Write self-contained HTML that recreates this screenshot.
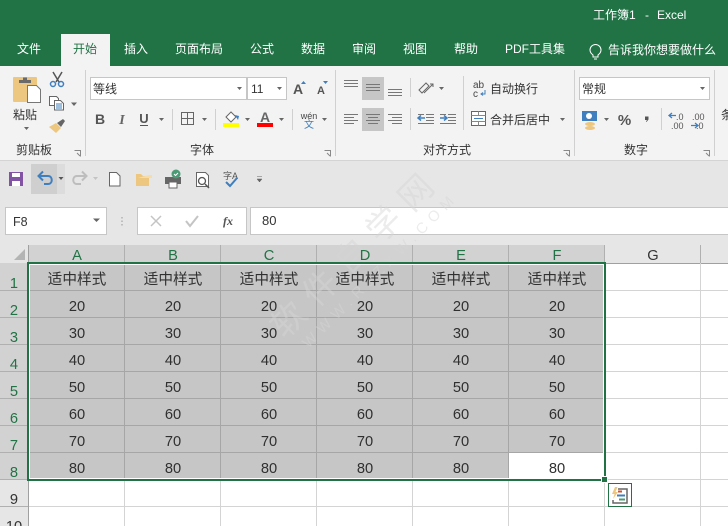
<!DOCTYPE html>
<html lang="zh"><head><meta charset="utf-8"><title>工作簿1 - Excel</title>
<style>
html,body{margin:0;padding:0;width:728px;height:526px;overflow:hidden;background:#fff}
svg{display:block}
text{font-family:"Liberation Sans","Noto Sans CJK SC",sans-serif;font-size:12px;fill:#333}
.t text{fill:#fff}
.g{text-anchor:middle;font-size:14.67px;fill:#303030}
.h{text-anchor:middle;font-size:14.67px;fill:#217346}
.r{text-anchor:middle;font-size:14.67px;fill:#217346}
</style></head><body>
<svg width="728" height="526" viewBox="0 0 728 526" xmlns="http://www.w3.org/2000/svg">
<!-- title + tabs -->
<rect width="728" height="66" fill="#217346"/>
<rect x="61" y="34" width="49" height="32" fill="#f3f3f3"/>
<g class="t">
<text x="593" y="19">工作簿1</text><text x="645" y="19">-</text><text x="657" y="19">Excel</text>
<text x="17" y="53">文件</text>
<text x="73" y="53" style="fill:#217346">开始</text>
<text x="124" y="53">插入</text>
<text x="175" y="53">页面布局</text>
<text x="250" y="53">公式</text>
<text x="301" y="53">数据</text>
<text x="352" y="53">审阅</text>
<text x="403" y="53">视图</text>
<text x="454" y="53">帮助</text>
<text x="505" y="53">PDF工具集</text>
<text x="608" y="54">告诉我你想要做什么</text>
</g>
<path d="M593 55c-2-1.500-3-3-3-5a5.500 5.500 0 0 1 11 0c0 2-1 3.500-3 5v2h-5zM594 59h3" fill="none" stroke="#fff"/>
<!-- ribbon -->
<rect y="66" width="728" height="94" fill="#f3f3f3"/>
<rect y="160" width="728" height="1" fill="#d4d4d4"/>
<rect y="161" width="728" height="84" fill="#e6e6e6"/>
<path d="M85.500 70v86M335.500 70v86M574.500 70v86M714.500 70v86" stroke="#d0d0d0"/>
<!-- clipboard -->
<rect x="13" y="77" width="24" height="25" rx="1" fill="#edc77f"/>
<path d="M19 80h4v-2.500h4V80h4v3H19z" fill="#6a6a6a"/>
<path d="M27.500 85.500h9l4 4v13h-13z" fill="#fff" stroke="#777"/>
<text x="13" y="119">粘贴</text>
<path d="M24 127h5l-2.500 3zM71 102.500h6l-3 3.500z" fill="#666"/>
<path d="M53 72l6 10M62 72l-6 10" stroke="#555" stroke-width="1.500" fill="none"/>
<circle cx="53" cy="84" r="2.500" fill="none" stroke="#3f7fbf" stroke-width="1.500"/><circle cx="61" cy="84" r="2.500" fill="none" stroke="#3f7fbf" stroke-width="1.500"/>
<path d="M49.500 96.500h7l2 2v7h-9z" fill="#fff" stroke="#666"/>
<path d="M54.500 100.500h6l3 3v6.500h-9z" fill="#fff" stroke="#666"/>
<path d="M56 104h6M56 106h6M56 108h6" stroke="#3f7fbf"/>
<path d="M49 127l7-4 5 5-5 5z" fill="#edc77f"/><path d="M57 123l6-4 2 2-4 6z" fill="#666"/>
<text x="16" y="154">剪贴板</text>
<path d="M74.500 150.500h6v6M77 153l3 3" fill="none" stroke="#888"/>
<!-- font group -->
<rect x="90.500" y="77.500" width="156" height="22" fill="#fff" stroke="#c6c6c6"/>
<rect x="247.500" y="77.500" width="39" height="22" fill="#fff" stroke="#c6c6c6"/>
<text x="93" y="93">等线</text><text x="251" y="93">11</text>
<path d="M237 87h5l-2.500 3zM277 87h5l-2.500 3z" fill="#666"/>
<text x="293" y="94" style="font-size:14px;fill:#555;font-weight:bold">A</text>
<text x="317" y="94" style="font-size:11px;fill:#555;font-weight:bold">A</text>
<path d="M301 84h5l-2.500-3zM323 81h5l-2.500 3z" fill="#3f7fbf"/>
<text x="100" y="124" text-anchor="middle" style="font-size:14px;font-weight:bold;fill:#555">B</text>
<text x="122" y="124" text-anchor="middle" style="font-size:14px;font-style:italic;font-weight:bold;fill:#666;font-family:'Liberation Serif',serif">I</text>
<text x="144" y="123" text-anchor="middle" style="font-size:13px;font-weight:bold;fill:#555">U</text>
<path d="M140 125.500h8" stroke="#555"/>
<path d="M159 118h5l-2.500 3zM202 118h5l-2.500 3zM245 118h5l-2.500 3zM279 118h5l-2.500 3zM322 118h5l-2.500 3z" fill="#666"/>
<path d="M172.500 109v21M215.500 109v21M292.500 109v21" stroke="#d0d0d0"/>
<path d="M181.500 112.500h12v12h-12zM187.500 112.500v12M181.500 118.500h12" fill="none" stroke="#666"/>
<path d="M226 117l5-5 5 5-5 5z" fill="#fff" stroke="#666"/><path d="M235 115l4 1-1 4z" fill="#3f7fbf"/>
<rect x="223" y="123" width="16" height="4" fill="#ff0"/>
<text x="265" y="122" text-anchor="middle" style="font-size:14px;font-weight:bold;fill:#666">A</text>
<rect x="257" y="123" width="16" height="4" fill="#f00"/>
<text x="309" y="119" text-anchor="middle" style="font-size:9px;fill:#444">wén</text>
<text x="309" y="128" text-anchor="middle" style="font-size:10px;fill:#3f7fbf">文</text>
<text x="190" y="154">字体</text>
<path d="M324.500 150.500h6v6M327 153l3 3" fill="none" stroke="#888"/>
<!-- alignment -->
<rect x="362" y="77" width="22" height="23" fill="#c6c6c6"/>
<rect x="362" y="108" width="22" height="23" fill="#c6c6c6"/>
<path d="M344 80.500h14M344 83.500h14M344 86.500h14M366 84.500h14M366 87.500h14M366 90.500h14M388 89.500h14M388 92.500h14M388 95.500h14" stroke="#777"/>
<path d="M344 114.500h14M344 117.500h10M344 120.500h14M344 123.500h10M366 114.500h14M368 117.500h10M366 120.500h14M368 123.500h10M388 114.500h14M392 117.500h10M388 120.500h14M392 123.500h10" stroke="#777"/>
<path d="M410.500 78v19M410.500 108v22M463.500 76v54" stroke="#d0d0d0"/>
<path d="M419 90l7-7 3 3-7 7zM424 93l9-9M430 84h3v3" fill="none" stroke="#666"/>
<path d="M439 87h5l-2.500 3zM560 118h5l-2.500 3z" fill="#666"/>
<path d="M426 114.500h8M426 117.500h8M426 120.500h8M418 123.500h16M418 114.500h6M448 114.500h8M448 117.500h8M448 120.500h8M440 123.500h16M440 114.500h6" stroke="#777"/>
<path d="M418 118h7M421 115.500l-3 2.500 3 2.500" fill="none" stroke="#3f7fbf" stroke-width="1.500"/>
<path d="M440 118h7M444 115.500l3 2.500-3 2.500" fill="none" stroke="#3f7fbf" stroke-width="1.500"/>
<text x="473" y="88" style="font-size:10px;fill:#444">ab</text>
<text x="473" y="97" style="font-size:10px;fill:#444">c</text>
<path d="M485 90v4h-4M483 92.500l-2 1.500 2 1.500" fill="none" stroke="#3f7fbf"/>
<text x="490" y="93">自动换行</text>
<rect x="471.500" y="111.500" width="14" height="14" fill="#fff" stroke="#666"/>
<path d="M471.500 115.500h14M471.500 121.500h14M478.500 111.500v4M478.500 121.500v4" stroke="#888" fill="none"/>
<path d="M474 118.500h9" stroke="#3f7fbf"/>
<text x="490" y="124">合并后居中</text>
<text x="423" y="154">对齐方式</text>
<path d="M563.500 150.500h6v6M566 153l3 3" fill="none" stroke="#888"/>
<!-- number -->
<rect x="579.500" y="77.500" width="130" height="22" fill="#fff" stroke="#c6c6c6"/>
<text x="582" y="93">常规</text>
<path d="M700 87h5l-2.500 3z" fill="#666"/>
<rect x="582" y="111" width="15" height="10" fill="#3f7fbf"/><circle cx="589" cy="116" r="3" fill="#fff"/>
<ellipse cx="590" cy="124" rx="5" ry="2" fill="#edc77f"/><ellipse cx="590" cy="128" rx="5" ry="2" fill="#edc77f"/>
<path d="M604 118h5l-2.500 3z" fill="#666"/>
<text x="624.500" y="125" text-anchor="middle" style="font-size:15px;fill:#555;font-weight:bold">%</text>
<path d="M645 116.500h3.500v3l-2 2.500-.5-.5 1-1.500h-2z" fill="#555"/>
<path d="M661.500 108v22" stroke="#d0d0d0"/>
<text x="676" y="120" style="font-size:9px;fill:#555">.0</text><text x="671" y="129" style="font-size:9px;fill:#555">.00</text>
<path d="M669 115.500h7M672 113l-3 2.500 3 2.500" fill="none" stroke="#3f7fbf" stroke-width="1.300"/>
<text x="692" y="120" style="font-size:9px;fill:#555">.00</text><text x="696" y="129" style="font-size:9px;fill:#555">.0</text>
<path d="M691 125.500h7M695 123l3 2.500-3 2.500" fill="none" stroke="#3f7fbf" stroke-width="1.300"/>
<text x="624" y="154">数字</text>
<path d="M703.500 150.500h6v6M706 153l3 3" fill="none" stroke="#888"/>
<text x="721" y="119">条</text>
<!-- QAT -->
<rect x="9" y="172" width="14" height="14" fill="#8253a5"/><rect x="12" y="173" width="8" height="4" fill="#fff"/><rect x="12" y="181" width="8" height="5" fill="#fff"/>
<rect x="31" y="164" width="26" height="30" fill="#cfcfcf"/><rect x="57" y="164" width="8" height="30" fill="#dcdcdc"/>
<path d="M39 176h9c5 0 5 8 0 8h-4M43 171.500l-4.500 4.500 4.500 4.500" fill="none" stroke="#3f7fbf" stroke-width="2"/>
<path d="M58.500 177h5l-2.500 3z" fill="#555"/>
<path d="M86 176h-9c-5 0-5 8 0 8h4M82 171.500l4.500 4.500-4.500 4.500" fill="none" stroke="#bdbdbd" stroke-width="2"/>
<path d="M93 177h5l-2.500 3z" fill="#c4c4c4"/>
<path d="M109.500 172.500h7l3.500 3.500v10h-10.500z" fill="#fff" stroke="#666"/>
<path d="M136 186v-12h5l2 2h6v10z" fill="#edc77f"/><path d="M138 178h14v-3l-3 0z" fill="#f5dca8"/>
<rect x="165" y="177" width="16" height="7" fill="#666"/><rect x="169" y="182" width="8" height="6" fill="#fff" stroke="#666"/>
<circle cx="176" cy="174" r="4.500" fill="#4d9a76"/><path d="M174 174l1.500 1.500 2.500-2.500" fill="none" stroke="#fff"/>
<path d="M196.500 172.500h9l3 3v11h-12z" fill="#fff" stroke="#666"/><circle cx="202" cy="181" r="3.500" fill="#fff" stroke="#555" stroke-width="1.300"/><path d="M205 184l4 4" stroke="#555" stroke-width="1.500"/>
<text x="223" y="179" style="font-size:9px;fill:#555">字A</text>
<path d="M226 182l4 4 7-8" fill="none" stroke="#3f7fbf" stroke-width="2"/>
<path d="M257 176.500h5M257 179h5l-2.500 3z" fill="#666" stroke="#666" stroke-width=".5"/>
<!-- formula bar -->
<rect x="5.500" y="207.500" width="101" height="27" fill="#fff" stroke="#c6c6c6"/>
<text x="13" y="226" style="font-size:12.500px">F8</text>
<path d="M93 218.500h7l-3.500 3.500z" fill="#666"/>
<path d="M122 217v1.500M122 220.500v1.500M122 224v1.500" stroke="#b0b0b0" stroke-width="1.500"/>
<rect x="137.500" y="207.500" width="109" height="27" fill="#fff" stroke="#c6c6c6"/>
<path d="M151 216l10 10M161 216l-10 10" stroke="#c4c4c4" stroke-width="1.500"/>
<path d="M186 221l4 5 8-10" fill="none" stroke="#c4c4c4" stroke-width="2"/>
<text x="228" y="225" text-anchor="middle" style="font-family:'Liberation Serif',serif;font-style:italic;font-weight:bold;font-size:12px;fill:#555">fx</text>
<rect x="250.500" y="207.500" width="478" height="27" fill="#fff" stroke="#c6c6c6"/>
<text x="262" y="225" style="font-size:13px">80</text>
<!-- grid white + lines -->
<rect x="0" y="245" width="28" height="281" fill="#e6e6e6"/>
<rect x="28" y="245" width="700" height="18" fill="#e6e6e6"/>
<rect x="29" y="245" width="576" height="18" fill="#d2d2d2"/>
<rect x="0" y="263" width="28" height="216" fill="#d2d2d2"/>
<path d="M25 249v11H14z" fill="#b4b4b4"/>
<path d="M28.500 245v18M124.500 245v18M220.500 245v18M316.500 245v18M412.500 245v18M508.500 245v18M604.500 245v18M700.500 245v18" stroke="#b0b0b0"/>
<path d="M0 290.500h28M0 317.500h28M0 344.500h28M0 371.500h28M0 398.500h28M0 425.500h28M0 452.500h28M0 479.500h28M0 506.500h28" stroke="#b0b0b0"/>
<path d="M28 263.500h700" stroke="#a0a0a0"/>
<path d="M28.500 245v281" stroke="#a0a0a0"/>
<path d="M29 290.500h699M29 317.500h699M29 344.500h699M29 371.500h699M29 398.500h699M29 425.500h699M29 452.500h699M29 479.500h699M29 506.500h699M124.500 263v263M220.500 263v263M316.500 263v263M412.500 263v263M508.500 263v263M604.500 263v263M700.500 263v263" stroke="#d4d4d4"/>
<!-- selected cells -->
<rect x="29" y="264" width="575" height="215" fill="#c6c6c6"/>
<rect x="509" y="453" width="95" height="26" fill="#fff"/>
<path d="M29 290.500h575M29 317.500h575M29 344.500h575M29 371.500h575M29 398.500h575M29 425.500h575M29 452.500h575M124.500 264v215M220.500 264v215M316.500 264v215M412.500 264v215M508.500 264v215" stroke="#a6a6a6"/>
<!-- watermark -->
<g transform="rotate(-45 352 256)" opacity=".45">
<text x="352" y="268" text-anchor="middle" textLength="214" style="font-size:34px;fill:#d6d6d6">软件自学网</text>
</g>
<g transform="rotate(-45 378 272)" opacity=".45">
<text x="378" y="277" text-anchor="middle" textLength="207" style="font-size:15px;fill:#d6d6d6">WWW.RJZXW.COM</text>
</g>
<rect x="29.500" y="264.500" width="574" height="214" fill="none" stroke="#fff"/>
<rect x="28" y="263" width="577" height="217" fill="none" stroke="#217346" stroke-width="2"/>
<rect x="601" y="476" width="7" height="7" fill="#fff"/><rect x="602" y="477" width="5" height="5" fill="#217346"/>
<!-- headers -->
<text class="h" y="260"><tspan x="77">A</tspan><tspan x="173">B</tspan><tspan x="269">C</tspan><tspan x="365">D</tspan><tspan x="461">E</tspan><tspan x="557">F</tspan></text>
<text class="h" y="260" x="653" style="fill:#333">G</text>
<text class="r" x="14" y="288">1</text><text class="r" x="14" y="315">2</text><text class="r" x="14" y="342">3</text><text class="r" x="14" y="369">4</text><text class="r" x="14" y="396">5</text><text class="r" x="14" y="423">6</text><text class="r" x="14" y="450">7</text><text class="r" x="14" y="477">8</text>
<text class="r" x="14" y="504" style="fill:#333">9</text><text class="r" x="14" y="531" style="fill:#333">10</text>
<!-- cells -->
<text class="g" y="284"><tspan x="77">适中样式</tspan><tspan x="173">适中样式</tspan><tspan x="269">适中样式</tspan><tspan x="365">适中样式</tspan><tspan x="461">适中样式</tspan><tspan x="557">适中样式</tspan></text>
<text class="g" y="311"><tspan x="77">20</tspan><tspan x="173">20</tspan><tspan x="269">20</tspan><tspan x="365">20</tspan><tspan x="461">20</tspan><tspan x="557">20</tspan></text>
<text class="g" y="338"><tspan x="77">30</tspan><tspan x="173">30</tspan><tspan x="269">30</tspan><tspan x="365">30</tspan><tspan x="461">30</tspan><tspan x="557">30</tspan></text>
<text class="g" y="365"><tspan x="77">40</tspan><tspan x="173">40</tspan><tspan x="269">40</tspan><tspan x="365">40</tspan><tspan x="461">40</tspan><tspan x="557">40</tspan></text>
<text class="g" y="392"><tspan x="77">50</tspan><tspan x="173">50</tspan><tspan x="269">50</tspan><tspan x="365">50</tspan><tspan x="461">50</tspan><tspan x="557">50</tspan></text>
<text class="g" y="419"><tspan x="77">60</tspan><tspan x="173">60</tspan><tspan x="269">60</tspan><tspan x="365">60</tspan><tspan x="461">60</tspan><tspan x="557">60</tspan></text>
<text class="g" y="446"><tspan x="77">70</tspan><tspan x="173">70</tspan><tspan x="269">70</tspan><tspan x="365">70</tspan><tspan x="461">70</tspan><tspan x="557">70</tspan></text>
<text class="g" y="473"><tspan x="77">80</tspan><tspan x="173">80</tspan><tspan x="269">80</tspan><tspan x="365">80</tspan><tspan x="461">80</tspan><tspan x="557">80</tspan></text>
<!-- quick analysis -->
<rect x="608.500" y="483.500" width="23" height="23" fill="#fff" stroke="#217346"/>
<path d="M615 487l-3 7h2.500l-1.500 5 5-7h-2.500l2-5z" fill="#edc77f"/>
<path d="M618 489h9v14h-14v-3" fill="none" stroke="#666" stroke-width="1.500"/>
<path d="M618 491.500h4" stroke="#d0502f" stroke-width="2"/><path d="M617 495.500h8" stroke="#3f7fbf" stroke-width="2"/><path d="M619 499.500h6" stroke="#4d9a76" stroke-width="2"/>
</svg>
</body></html>
